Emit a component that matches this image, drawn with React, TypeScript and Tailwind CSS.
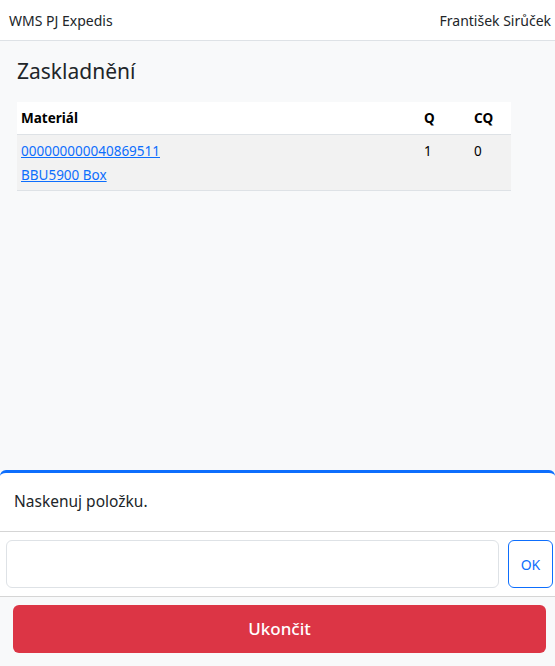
export default function App() {
  return (
    <div
      className="h-[666px] w-full flex flex-col bg-[#f8f9fa] text-[#212529]"
      style={{ fontFamily: '"Noto Sans", sans-serif' }}
    >
      <header className="h-[41px] shrink-0 bg-white border-b border-[#dee2e6] flex items-center justify-between pl-[9px] pr-[4px] text-[14px]">
        <span>WMS PJ Expedis</span>
        <span>František Sirůček</span>
      </header>

      <main className="flex-1 px-[17px] pt-[13px]">
        <h1 className="text-[21px] leading-[34px] mb-[14px]">Zaskladnění</h1>
        <table className="w-[494px] text-[13.5px] border-collapse text-black">
          <thead>
            <tr className="bg-white border-b border-[#dee2e6] h-[32px]">
              <th className="text-left font-bold pl-[4px]">Materiál</th>
              <th className="text-left font-bold w-[50px]">Q</th>
              <th className="text-left font-bold w-[37px]">CQ</th>
            </tr>
          </thead>
          <tbody>
            <tr className="bg-[#f2f2f2] border-b border-[#dee2e6] align-top">
              <td className="pl-[4px] pt-[4px] pb-[3px] leading-[24px]">
                <a href="#" className="text-[#0d6efd] underline block">000000000040869511</a>
                <a href="#" className="text-[#0d6efd] underline block">BBU5900 Box</a>
              </td>
              <td className="pt-[4px] leading-[24px]">1</td>
              <td className="pt-[4px] leading-[24px]">0</td>
            </tr>
          </tbody>
        </table>
      </main>

      <footer className="shrink-0">
        <div className="bg-white border-t-[3px] border-[#0d6efd] rounded-t-[6px] h-[62px] flex items-center pl-[14px] text-[15.5px] border-b border-b-[#d5d5d5]">
          Naskenuj položku.
        </div>
        <div className="bg-white flex items-center gap-[9px] px-[6px] pr-[2px] py-[8px] border-b border-[#d5d5d5]">
          <input className="flex-1 h-[48px] rounded-[6px] border border-[#dee2e6] bg-white outline-none" />
          <button className="w-[45px] h-[48px] rounded-[6px] border border-[#0d6efd] text-[#0d6efd] text-[14px]">OK</button>
        </div>
        <div className="pl-[13px] pr-[9px] pt-[8px] pb-[13px]">
          <button className="w-full h-[48px] rounded-[6px] bg-[#dc3545] text-white text-[17px] font-medium">Ukončit</button>
        </div>
      </footer>
    </div>
  );
}
